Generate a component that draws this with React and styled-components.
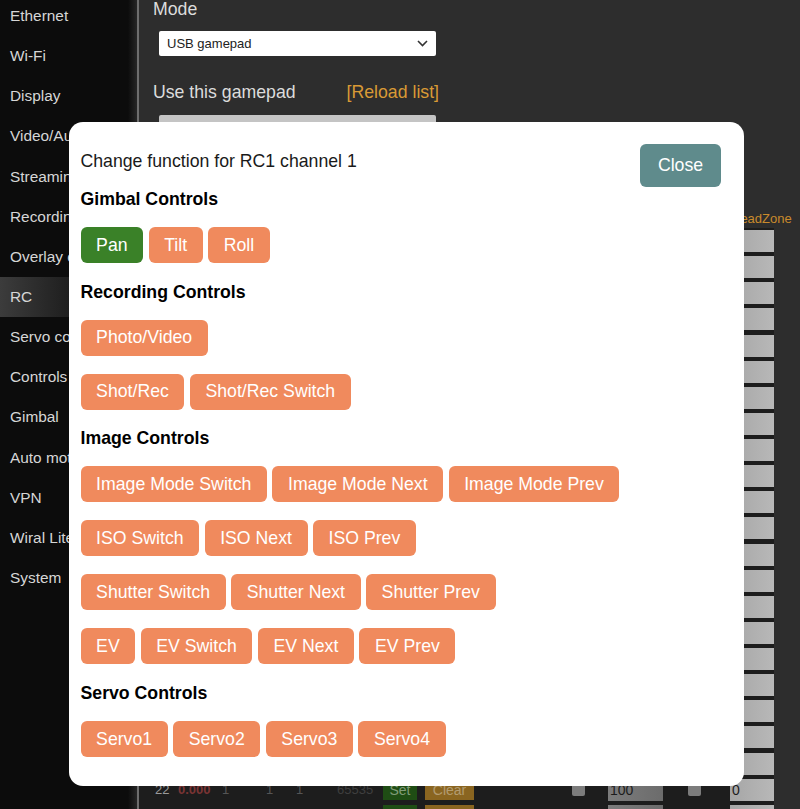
import React from 'react'
import styled, { createGlobalStyle } from 'styled-components'

const GlobalStyle = createGlobalStyle`
  html, body {
    margin: 0;
    padding: 0;
    height: 100%;
    background: #2d2d2d;
    overflow: hidden;
  }
  body {
    font-family: "Liberation Sans", Arial, sans-serif;
  }
`

const Page = styled.div`
  position: relative;
  width: 800px;
  height: 809px;
  display: flex;
  overflow: hidden;
  background: #2d2d2d;
`

const Sidebar = styled.nav`
  width: 137px;
  flex: none;
  background: linear-gradient(90deg, #0c0c0c 128px, #262626 137px);
  border-right: 2px solid #6e6e6e;
  display: flex;
  flex-direction: column;
  margin-top: -4px;
`

const NavItem = styled.div`
  height: 40.15px;
  flex: none;
  padding-left: 10px;
  display: flex;
  align-items: center;
  font-size: 15.4px;
  white-space: nowrap;
  color: #d6d6d6;
  background: ${p => (p.$active ? 'linear-gradient(90deg, #3c3c3c, #1e1e1e 70px)' : 'transparent')};
`

const Main = styled.main`
  flex: 1;
  min-width: 0;
  display: flex;
  flex-direction: column;
`

const Settings = styled.div`
  padding-left: 14px;
  height: 208px;
  flex: none;
`

const Label = styled.div`
  font-size: 17.7px;
  color: #dcdcdc;
  line-height: 18px;
`

const ModeSelect = styled.div`
  margin: 13px 0 0 6px;
  width: 277px;
  height: 25px;
  box-sizing: border-box;
  background: #fff;
  border-radius: 2px;
  padding: 0 8px;
  display: flex;
  align-items: center;
  justify-content: space-between;
  font-size: 13px;
  color: #222;
`

const GamepadRow = styled.div`
  margin-top: 27px;
  width: 286px;
  display: flex;
  justify-content: space-between;
`

const Reload = styled.span`
  font-size: 17.7px;
  line-height: 18px;
  color: #d99a35;
`

const DisabledSelect = styled.div`
  margin: 14px 0 0 6px;
  width: 277px;
  height: 30px;
  background: #c4c4c4;
  border-radius: 2px;
`

const TableHead = styled.div`
  width: 635px;
  height: 20px;
  flex: none;
  display: flex;
  justify-content: flex-end;
  align-items: center;
  font-size: 13px;
  color: #c98a2c;
`

const HeadCell = styled.span`
  width: 43px;
  white-space: nowrap;
`

const Row = styled.div`
  width: 635px;
  height: 26.14px;
  flex: none;
  box-sizing: border-box;
  padding-left: 16px;
  display: flex;
  align-items: center;
  background: #1d1d1d;
  font-size: 13px;
  color: #555;
`

const Cell = styled.span`
  flex: none;
  width: ${p => p.$w}px;
  color: ${p => p.$color || 'inherit'};
  font-weight: ${p => (p.$bold ? 700 : 400)};
`

const CellBtn = styled.span`
  flex: none;
  width: ${p => p.$w}px;
  height: 21px;
  margin-right: ${p => p.$mr}px;
  display: flex;
  align-items: center;
  justify-content: center;
  font-size: 14px;
  background: ${p => p.$bg};
  color: ${p => p.$fg};
`

const CheckBox = styled.span`
  flex: none;
  width: 13px;
  height: 13px;
  border-radius: 2px;
  background: #7c7c7c;
  margin-right: ${p => p.$mr}px;
`

const ValueInput = styled.span`
  flex: none;
  width: ${p => p.$w}px;
  height: 22px;
  box-sizing: border-box;
  margin-right: ${p => p.$mr || 0}px;
  background: ${p => p.$bg};
  color: #1c1c1c;
  font-size: 14px;
  display: flex;
  align-items: center;
  padding-left: 2px;
`

const Modal = styled.div`
  position: absolute;
  left: 69px;
  top: 122px;
  width: 675px;
  height: 664px;
  box-sizing: border-box;
  padding: 21px 23px 0 11.5px;
  background: #fff;
  border-radius: 14px;
  color: #000;
`

const ModalHead = styled.div`
  display: flex;
  justify-content: space-between;
  align-items: flex-start;
  height: 47px;
`

const ModalTitle = styled.div`
  font-size: 17.7px;
  line-height: 18px;
  margin-top: 9px;
  color: #1a1a1a;
`

const CloseButton = styled.button`
  width: 81px;
  height: 43px;
  margin-top: 1px;
  border: none;
  border-radius: 6px;
  background: #5f8b8c;
  color: #fff;
  font: inherit;
  font-size: 17.7px;
`

const Section = styled.section`
  padding-bottom: 1.7px;
`

const SectionTitle = styled.h3`
  margin: 0 0 18px;
  font-size: 17.7px;
  line-height: 19px;
  font-weight: 700;
  color: #000;
`

const ButtonRow = styled.div`
  display: flex;
  gap: 5.4px;
  margin-bottom: 18px;
`

const FnButton = styled.button`
  height: 36px;
  padding: 0 15.6px;
  border: none;
  border-radius: 6px;
  background: ${p => (p.$active ? '#3a8128' : '#f08a5d')};
  color: #fff;
  font: inherit;
  font-size: 17.7px;
  white-space: nowrap;
`

const navItems = ['Ethernet', 'Wi-Fi', 'Display', 'Video/Audio', 'Streaming', 'Recording', 'Overlay e', 'RC', 'Servo control', 'Controls', 'Gimbal', 'Auto motion', 'VPN', 'Wiral Lite', 'System']

const sections = [
  { title: 'Gimbal Controls', rows: [['Pan', 'Tilt', 'Roll']] },
  { title: 'Recording Controls', rows: [['Photo/Video'], ['Shot/Rec', 'Shot/Rec Switch']] },
  {
    title: 'Image Controls',
    rows: [
      ['Image Mode Switch', 'Image Mode Next', 'Image Mode Prev'],
      ['ISO Switch', 'ISO Next', 'ISO Prev'],
      ['Shutter Switch', 'Shutter Next', 'Shutter Prev'],
      ['EV', 'EV Switch', 'EV Next', 'EV Prev'],
    ],
  },
  { title: 'Servo Controls', rows: [['Servo1', 'Servo2', 'Servo3', 'Servo4']] },
]

const channels = Array.from({ length: 23 }, (_, i) => i + 1)

// only row 22 shows its text, the others sit behind the dialog or below the fold
const ChannelRow = ({ ch }) => {
  const text = value => (ch === 22 ? value : null)
  return (
    <Row>
      <Cell $w={23} $color="#9a9a9a">{text(ch)}</Cell>
      <Cell $w={44} $color="#7a3434" $bold>{text('0.000')}</Cell>
      <Cell $w={44}>{text('1')}</Cell>
      <Cell $w={30}>{text('1')}</Cell>
      <Cell $w={41}>{text('1')}</Cell>
      <Cell $w={46} $color="#3f3f3f">{text('65535')}</Cell>
      <CellBtn $w={34} $mr={8} $bg="#1f4d14" $fg="#7f9c77">{text('Set')}</CellBtn>
      <CellBtn $w={49} $mr={98} $bg="#8a6520" $fg="#b39c70">{text('Clear')}</CellBtn>
      <CheckBox $mr={23} />
      <ValueInput $w={55} $mr={25} $bg="linear-gradient(90deg, #7c7c7c, #6c6c6c)">{text('100')}</ValueInput>
      <CheckBox $mr={29} />
      <ValueInput $w={44} $bg="linear-gradient(90deg, #a6a6a6, #b8b8b8)">{text('0')}</ValueInput>
    </Row>
  )
}

const App = () => {
  return (
    <>
      <GlobalStyle />
      <Page>
        <Sidebar>
          {navItems.map(item => (
            <NavItem key={item} $active={item === 'RC'}>{item}</NavItem>
          ))}
        </Sidebar>
        <Main>
          <Settings>
            <Label>Mode</Label>
            <ModeSelect>
              USB gamepad
              <svg width="11" height="7" viewBox="0 0 11 7" fill="none" stroke="#333" strokeWidth="1.6">
                <path d="M1 1l4.5 4.5L10 1" />
              </svg>
            </ModeSelect>
            <GamepadRow>
              <Label>Use this gamepad</Label>
              <Reload>[Reload list]</Reload>
            </GamepadRow>
            <DisabledSelect />
          </Settings>
          <TableHead>
            <HeadCell>DeadZone</HeadCell>
          </TableHead>
          {channels.map(ch => <ChannelRow key={ch} ch={ch} />)}
        </Main>
        <Modal>
          <ModalHead>
            <ModalTitle>Change function for RC1 channel 1</ModalTitle>
            <CloseButton>Close</CloseButton>
          </ModalHead>
          {sections.map(section => (
            <Section key={section.title}>
              <SectionTitle>{section.title}</SectionTitle>
              {section.rows.map(row => (
                <ButtonRow key={row[0]}>
                  {row.map(label => (
                    <FnButton key={label} $active={label === 'Pan'}>{label}</FnButton>
                  ))}
                </ButtonRow>
              ))}
            </Section>
          ))}
        </Modal>
      </Page>
    </>
  )
}

export default App
